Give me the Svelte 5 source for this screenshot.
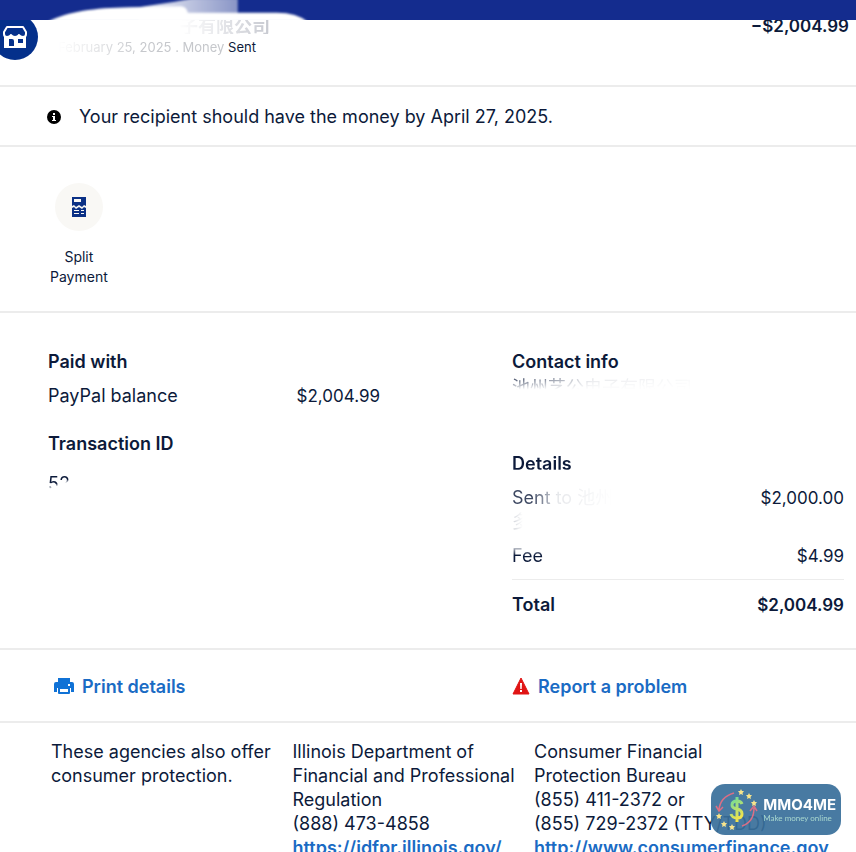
<!-- src/lib/components/TransactionDetails.svelte -->
<script lang="ts">
  type Agency = {
    lines: string[];
    url?: string;
  };

  const currency = new Intl.NumberFormat('en-US', { style: 'currency', currency: 'USD' });

  const sent = 2000;
  const fee = 4.99;
  const total = sent + fee;

  const agencies: Agency[] = [
    { lines: ['These agencies also offer', 'consumer protection.'] },
    {
      lines: ['Illinois Department of', 'Financial and Professional', 'Regulation', '(888) 473-4858'],
      url: 'https://idfpr.illinois.gov/'
    },
    {
      lines: ['Consumer Financial', 'Protection Bureau', '(855) 411-2372 or', '(855) 729-2372 (TTY/TDD)'],
      url: 'http://www.consumerfinance.gov'
    }
  ];
</script>

<div class="page">
  <div class="topbar">
    <svg class="smear" width="300" height="22" viewBox="0 0 300 22" aria-hidden="true">
      <defs>
        <linearGradient id="fade" x1="0" x2="1" y1="0" y2="0">
          <stop offset="0" stop-color="#fff" stop-opacity="0.95" />
          <stop offset="0.45" stop-color="#fff" stop-opacity="0.75" />
          <stop offset="1" stop-color="#fff" stop-opacity="0.5" />
        </linearGradient>
        <filter id="soft" x="-5%" y="-20%" width="110%" height="140%">
          <feGaussianBlur stdDeviation="1" />
        </filter>
      </defs>
      <g filter="url(#soft)">
        <path d="M110 8 L150 2 L170 -2 L219 -2 V24 H110Z" fill="url(#fade)" />
        <path d="M10 24 C34 12 60 9 100 8 L157 7 Q163 8 164 14 L262 14 Q284 14 296 24Z" fill="#fff" />
      </g>
    </svg>
  </div>

  <header class="summary">
    <div class="avatar">
      <svg width="26" height="24" viewBox="0 0 26 24" aria-hidden="true">
        <path
          d="M5 2H21L24 7V9Q24 12 21 12Q18 12 17 10Q16 12 13 12Q10 12 9 10Q8 12 5 12Q2 12 2 9V7Z"
          fill="none" stroke="#fff" stroke-width="2" stroke-linejoin="round"
        />
        <path
          fill="#fff" fill-rule="evenodd"
          d="M2 11H24V23H2Z M7 14V21H12V16Q12 14 10 14Z M16 14V18H21V14Z"
        />
      </svg>
    </div>
    <div class="payee">
      <h1>子有限公司</h1>
      <p><span class="faded">February 25, 2025 . Money</span> Sent</p>
    </div>
    <strong class="amount">−{currency.format(total)}</strong>
  </header>

  <section class="notice">
    <svg width="14" height="14" viewBox="0 0 14 14" aria-hidden="true">
      <circle cx="7" cy="7" r="7" fill="#000" />
      <path d="M6 3H8V5H6Z M5 6H8V10H9V11H5V10H6V7H5Z" fill="#fff" />
    </svg>
    <p>Your recipient should have the money by April 27, 2025.</p>
  </section>

  <section class="tools">
    <button class="split">
      <span class="disc">
        <svg width="16" height="20" viewBox="0 0 16 20" aria-hidden="true">
          <path
            fill="#0b3186" fill-rule="evenodd"
            d="M1 0H15V9L13 8L11 10L8 8L5 10L3 8L1 9Z M3 2V5H10V2Z"
          />
          <path
            fill="#0b3186" fill-rule="evenodd"
            d="M1 11L3 10L5 12L8 10L11 12L13 10L15 11V20H1Z M3 13V14H8V13Z M10 13V14H13V13Z M3 16V17H8V16Z M10 16V17H13V16Z"
          />
        </svg>
      </span>
      <span>Split<br />Payment</span>
    </button>
  </section>

  <section class="info">
    <div>
      <h2>Paid with</h2>
      <div class="row">
        <span>PayPal balance</span>
        <span class="value">{currency.format(total)}</span>
      </div>
      <h2 class="next">Transaction ID</h2>
      <p class="transaction-id">52</p>
    </div>

    <div>
      <h2>Contact info</h2>
      <p class="contact">池州艺公电子有限公司</p>
      <h2 class="details-title">Details</h2>
      <table>
        <tbody>
          <tr>
            <th scope="row"><span class="sent-to">Sent to 池州</span><br /><span class="sent-name">多</span></th>
            <td>{currency.format(sent)}</td>
          </tr>
          <tr class="fee">
            <th scope="row"><span class="fee-label">Fee</span></th>
            <td>{currency.format(fee)}</td>
          </tr>
          <tr class="total">
            <th scope="row">Total</th>
            <td>{currency.format(total)}</td>
          </tr>
        </tbody>
      </table>
    </div>
  </section>

  <nav class="actions">
    <a href="#print">
      <svg width="20" height="18" viewBox="0 0 20 18" aria-hidden="true">
        <path
          fill="#1072d6" fill-rule="evenodd"
          d="M4 0H16V4H18Q20 4 20 6V14H17V10H3V14H0V6Q0 4 2 4H4Z M14 6V8H16V6Z"
        />
        <path d="M5 10H15V15H5Z" fill="#fff" stroke="#1072d6" stroke-width="2" stroke-linejoin="round" />
      </svg>
      Print details
    </a>
    <a href="#report">
      <svg width="18" height="18" viewBox="0 0 18 18" aria-hidden="true">
        <path d="M9 0L17 16H1Z" fill="#e01414" stroke="#e01414" stroke-width="1" stroke-linejoin="round" />
        <path d="M8 5H10L9.700 11H8.300Z M8 12H10V14H8Z" fill="#fff" />
      </svg>
      Report a problem
    </a>
  </nav>

  <footer class="agencies">
    {#each agencies as agency (agency.lines[0])}
      <div>
        {#each agency.lines as line}
          <p>{line}</p>
        {/each}
        {#if agency.url}
          <a href={agency.url}>{agency.url}</a>
        {/if}
      </div>
    {/each}
  </footer>

  <aside class="watermark">
    <svg width="44" height="44" viewBox="0 0 44 44" aria-hidden="true">
      <defs>
        <linearGradient id="dollar" x1="0" x2="0.300" y1="0" y2="1">
          <stop offset="0" stop-color="#62dba0" />
          <stop offset="1" stop-color="#f2e34c" />
        </linearGradient>
      </defs>
      <g fill="none" stroke="#dc6f86" stroke-width="1.500">
        <path d="M19 5Q5 9 4 22M1 18L4 23L8 19" />
        <path d="M27 38Q39 34 39 20M35 23L39 18L42 23" />
      </g>
      <path
        d="M27 16Q26 13 22 13Q17 13 17 17Q17 20 22 21Q27 22 27 26Q27 30 22 30Q17 30 16 26M22 9V34"
        fill="none" stroke="url(#dollar)" stroke-width="3"
      />
      <g fill="#f8e48c">
        {#each [[26, 4], [34, 8], [39, 15], [4, 28], [9, 36], [17, 39]] as [x, y]}
          <path
            transform="translate({x} {y})"
            d="M0 -3L1 -1L3 -1L1.500 1L2 3L0 2L-2 3L-1.500 1L-3 -1L-1 -1Z"
          />
        {/each}
      </g>
    </svg>
    <div>
      <strong>MMO4ME</strong>
      <small>Make money online</small>
    </div>
  </aside>
</div>

<style>
  :global(body) {
    margin: 0;
    background: #fff;
  }

  .page {
    height: 100vh;
    overflow-y: auto;
    scrollbar-width: none;
    color: #0c1a3a;
    font-family: Inter, 'Liberation Sans', 'Noto Sans CJK SC', sans-serif;
    font-size: 18px;
    line-height: 24px;
  }

  h1,
  h2,
  p {
    margin: 0;
  }

  h2 {
    font-size: 18px;
    font-weight: 600;
    line-height: 24px;
  }

  a {
    color: #1a6bc4;
    font-weight: 600;
  }

  .topbar {
    position: relative;
    z-index: 1;
    height: 20px;
    background: #142c8e;
  }

  .smear {
    position: absolute;
    top: 0;
    left: 25px;
    height: 20px;
    overflow: hidden;
  }

  .summary {
    display: flex;
    align-items: flex-start;
    height: 65px;
    padding-right: 7px;
    border-bottom: 2px solid #ececec;
  }

  .avatar {
    display: flex;
    align-items: center;
    justify-content: center;
    width: 46px;
    height: 46px;
    margin: -6px 0 0 -8px;
    border-radius: 50%;
    background: #04308b;
  }

  .payee {
    flex: 1;
    margin-left: 20px;
  }

  .payee h1 {
    padding-left: 122px;
    color: #c9cbd2;
    font-size: 18px;
    font-weight: 600;
    line-height: 14px;
    mask-image: linear-gradient(to right, transparent 120px, #000 210px);
  }

  .payee p {
    margin-top: 3px;
    font-size: 13px;
    line-height: 20px;
  }

  .faded {
    color: #c6c8cc;
    mask-image: linear-gradient(to right, transparent, #000 50%);
  }

  .amount {
    font-size: 17px;
    font-weight: 600;
    line-height: 12px;
  }

  .notice {
    display: flex;
    align-items: center;
    gap: 18px;
    padding: 18px 47px 16px;
    border-bottom: 2px solid #ececec;
  }

  .tools {
    padding: 36px 50px 24px;
    border-bottom: 2px solid #ececec;
  }

  .split {
    display: flex;
    flex-direction: column;
    align-items: center;
    gap: 16px;
    padding: 0;
    border: 0;
    background: none;
    color: inherit;
    font: inherit;
    font-size: 14px;
    line-height: 20px;
    cursor: pointer;
  }

  .disc {
    display: flex;
    align-items: center;
    justify-content: center;
    width: 48px;
    height: 48px;
    border-radius: 50%;
    background: #f9f8f5;
  }

  .info {
    display: grid;
    grid-template-columns: 1fr 1fr;
    gap: 132px;
    padding: 37px 12px 31px 48px;
    border-bottom: 2px solid #ececec;
  }

  .row {
    display: flex;
    justify-content: space-between;
    margin-top: 10px;
  }

  .value,
  td {
    font-size: 17px;
  }

  .next {
    margin-top: 24px;
  }

  .transaction-id {
    width: fit-content;
    margin-top: 16px;
    mask-image: linear-gradient(160deg, #000 45%, transparent 55%);
  }

  .contact {
    font-family: 'Noto Sans CJK SC', sans-serif;
    mask-image: linear-gradient(to bottom, #000 20%, transparent 65%),
      linear-gradient(to right, rgba(0, 0, 0, 0.8), rgba(0, 0, 0, 0.1) 80px, transparent 200px);
    mask-composite: intersect;
  }

  .details-title {
    margin-top: 54px;
    mask-image: linear-gradient(to bottom, #000 70%, transparent 80%);
  }

  table {
    width: 100%;
    margin-top: 10px;
    border-collapse: collapse;
  }

  th,
  td {
    padding: 0;
    vertical-align: top;
  }

  th {
    font-weight: 400;
    text-align: left;
  }

  td {
    text-align: right;
  }

  .sent-to {
    mask-image: linear-gradient(to right, rgba(0, 0, 0, 0.8) 20%, rgba(0, 0, 0, 0.1) 45%, transparent);
  }

  .sent-name {
    mask-image: linear-gradient(to right, rgba(0, 0, 0, 0.2), transparent 60%);
  }

  .fee-label {
    mask-image: linear-gradient(to bottom, transparent, #000 50%);
  }

  .fee th,
  .fee td {
    padding: 10px 0 11px;
    border-bottom: 1px solid #ececec;
  }

  .total th,
  .total td {
    padding-top: 13px;
    font-weight: 600;
  }

  .actions {
    display: grid;
    grid-template-columns: 1fr 1fr;
    gap: 130px;
    padding: 25px 16px 22px 54px;
    border-bottom: 2px solid #ececec;
  }

  .actions a {
    display: flex;
    align-items: center;
    gap: 8px;
    text-decoration: none;
  }

  .agencies {
    display: grid;
    grid-template-columns: 3fr 3fr 4fr;
    padding: 17px 0 24px 51px;
  }

  .agencies p {
    white-space: nowrap;
  }

  .watermark {
    position: fixed;
    right: 15px;
    bottom: 17px;
    display: flex;
    align-items: center;
    gap: 4px;
    box-sizing: border-box;
    height: 51px;
    padding: 0 5px 0 4px;
    border-radius: 14px;
    background: rgba(56, 111, 154, 0.92);
    color: #fff;
  }

  .watermark strong,
  .watermark small {
    display: block;
  }

  .watermark strong {
    font-size: 15px;
    font-weight: 700;
    line-height: 16px;
  }

  .watermark small {
    color: #a9d8cf;
    font-family: Lato, sans-serif;
    font-size: 8px;
    line-height: 10px;
  }
</style>
